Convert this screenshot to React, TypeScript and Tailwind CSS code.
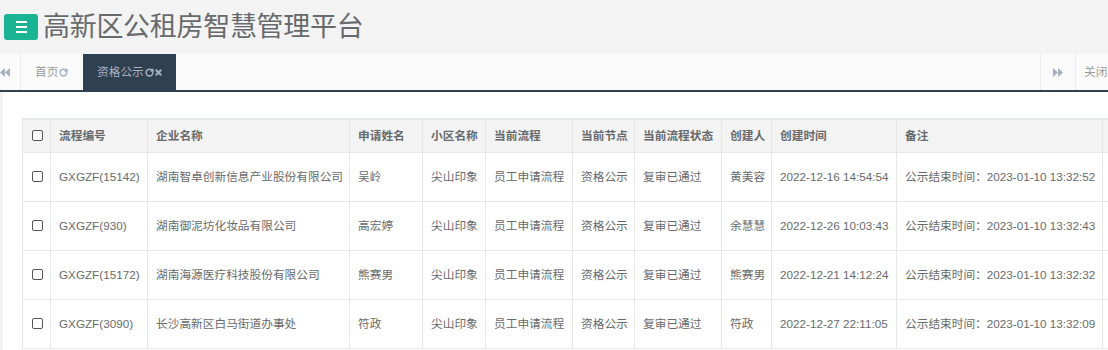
import { RotateCw, X } from "lucide-react";

const rows = [
  ["GXGZF(15142)", "湖南智卓创新信息产业股份有限公司", "吴岭", "尖山印象", "员工申请流程", "资格公示", "复审已通过", "黄美容", "2022-12-16 14:54:54", "公示结束时间：2023-01-10 13:32:52"],
  ["GXGZF(930)", "湖南御泥坊化妆品有限公司", "高宏婷", "尖山印象", "员工申请流程", "资格公示", "复审已通过", "余慧慧", "2022-12-26 10:03:43", "公示结束时间：2023-01-10 13:32:43"],
  ["GXGZF(15172)", "湖南海源医疗科技股份有限公司", "熊赛男", "尖山印象", "员工申请流程", "资格公示", "复审已通过", "熊赛男", "2022-12-21 14:12:24", "公示结束时间：2023-01-10 13:32:32"],
  ["GXGZF(3090)", "长沙高新区白马街道办事处", "符政", "尖山印象", "员工申请流程", "资格公示", "复审已通过", "符政", "2022-12-27 22:11:05", "公示结束时间：2023-01-10 13:32:09"],
];

const headers = ["流程编号", "企业名称", "申请姓名", "小区名称", "当前流程", "当前节点", "当前流程状态", "创建人", "创建时间", "备注", ""];
const widths = ["w-[97px]", "w-[202px]", "w-[73px]", "w-[63px]", "w-[87px]", "w-[62px]", "w-[87px]", "w-[50px]", "w-[125px]", "w-[206px]", "w-[120px]"];

function Box() {
  return <span className="block w-[11px] h-[11px] border border-[#555] rounded-[2px] bg-white" />;
}

function Backward() {
  return (
    <svg width="10" height="9" viewBox="0 0 10 9">
      <path d="M5 0 L0 4.5 L5 9 Z M10 0 L5 4.5 L10 9 Z" fill="#a7b1c2" />
    </svg>
  );
}

function Forward() {
  return (
    <svg width="10" height="9" viewBox="0 0 10 9">
      <path d="M0 0 L5 4.5 L0 9 Z M5 0 L10 4.5 L5 9 Z" fill="#a7b1c2" />
    </svg>
  );
}

export default function App() {
  return (
    <div
      className="w-[1108px] h-[350px] overflow-hidden bg-white text-[#676a6c]"
      style={{ fontFamily: '"Liberation Sans", "Noto Sans CJK SC", sans-serif' }}
    >
      <header className="h-[54px] bg-[#f3f3f4] flex items-center pl-1">
        <div className="w-[34px] h-[26px] rounded-[3px] bg-[#1ab394] flex flex-col items-center justify-center gap-[3px]">
          <span className="block w-[11px] h-[2px] bg-white" />
          <span className="block w-[11px] h-[2px] bg-white" />
          <span className="block w-[11px] h-[2px] bg-white" />
        </div>
        <h1 className="ml-[5px] text-[27px] leading-none text-[#676a6c] tracking-[-0.3px]">高新区公租房智慧管理平台</h1>
      </header>

      <nav className="h-[38px] bg-[#fafafa] border-b-2 border-[#2f4050] flex items-stretch text-[11.7px]">
        <div className="w-[21px] border-r border-[#e7eaec] flex items-center">
          <Backward />
        </div>
        <div className="w-[62px] flex items-center pl-[14px] text-[#999c9e]">
          首页
          <RotateCw size={9} strokeWidth={4} className="text-[#a7b1c2] ml-[1px]" />
        </div>
        <div className="w-[93px] bg-[#2f4050] flex items-center pl-[14px] text-[#a7b1c2]">
          资格公示
          <RotateCw size={9} strokeWidth={4} className="ml-[1px]" />
          <X size={9} strokeWidth={5} />
        </div>
        <div className="flex-1" />
        <div className="w-[36px] border-l border-r border-[#e7eaec] flex items-center justify-center">
          <Forward />
        </div>
        <div className="pl-[8px] flex items-center text-[#999c9e] w-[32px] whitespace-nowrap">关闭</div>
      </nav>

      <div className="flex h-[258px]">
        <div className="w-[3px] bg-[#f3f3f4]" />
        <div className="flex-1 pl-[19px] pt-[26px] overflow-hidden">
          <table className="table-fixed border-collapse w-[1200px] text-[11.7px] border-t-2 border-l border-[#e7eaec]">
            <colgroup>
              <col className="w-[28px]" />
              {widths.map((w, i) => (
                <col key={i} className={w} />
              ))}
            </colgroup>
            <thead>
              <tr className="h-[33px] bg-[#f3f3f3]">
                <th className="border border-[#e7e7e7] pl-[9px]">
                  <Box />
                </th>
                {headers.map((h, i) => (
                  <th key={i} className="border border-[#e7e7e7] text-left font-bold pl-[8px] whitespace-nowrap text-[#676a6c]">
                    {h}
                  </th>
                ))}
              </tr>
            </thead>
            <tbody>
              {rows.map((r, i) => (
                <tr key={i} className="h-[49px]">
                  <td className="border border-[#e7e7e7] pl-[9px]">
                    <Box />
                  </td>
                  {r.map((c, j) => (
                    <td key={j} className="border border-[#e7e7e7] pl-[8px] whitespace-nowrap">
                      {c}
                    </td>
                  ))}
                  <td className="border border-[#e7e7e7]" />
                </tr>
              ))}
            </tbody>
          </table>
        </div>
      </div>
    </div>
  );
}
